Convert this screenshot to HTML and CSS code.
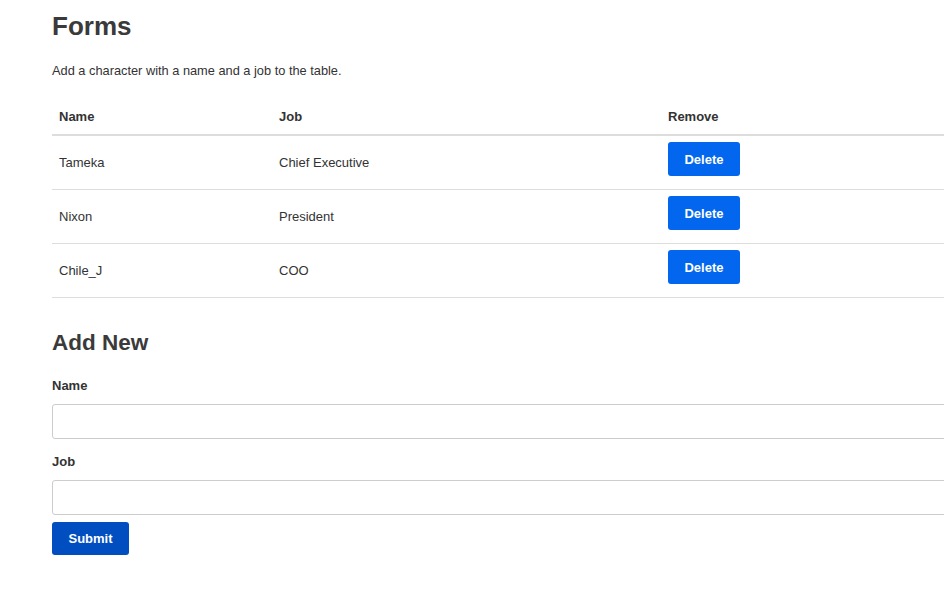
FILE: index.html
```html
<!DOCTYPE html>
<html lang="en">
<head>
<meta charset="utf-8">
<title>Forms</title>
<link rel="stylesheet" href="styles.css">
</head>
<body>
<div class="container">
  <h1 class="title">Forms</h1>
  <p class="lead">Add a character with a name and a job to the table.</p>
  <table class="table">
    <thead>
      <tr>
        <th class="col-name">Name</th>
        <th class="col-job">Job</th>
        <th>Remove</th>
      </tr>
    </thead>
    <tbody>
      <tr>
        <td>Tameka</td>
        <td>Chief Executive</td>
        <td><button class="btn btn-delete">Delete</button></td>
      </tr>
      <tr>
        <td>Nixon</td>
        <td>President</td>
        <td><button class="btn btn-delete">Delete</button></td>
      </tr>
      <tr>
        <td>Chile_J</td>
        <td>COO</td>
        <td><button class="btn btn-delete">Delete</button></td>
      </tr>
    </tbody>
  </table>
  <h2 class="subtitle">Add New</h2>
  <form class="form">
    <label class="label" for="name">Name</label>
    <input class="input" type="text" id="name">
    <label class="label label-job" for="job">Job</label>
    <input class="input" type="text" id="job">
    <button type="button" class="btn btn-submit">Submit</button>
  </form>
</div>
</body>
</html>
```
FILE: styles.css
```css
html, body {
  margin: 0;
  padding: 0;
  overflow: hidden;
  background: #fff;
}
body {
  font-family: "Liberation Sans", Arial, sans-serif;
  color: #333;
  font-size: 13px;
}
.container {
  width: 1100px;
  padding-left: 52px;
}
.title {
  font-size: 26px;
  line-height: 34px;
  font-weight: bold;
  margin: 9px 0 0;
  color: #3a3a3a;
}
.lead {
  font-size: 12.8px;
  line-height: 20px;
  margin: 18px 0 0;
}
.table {
  width: 100%;
  border-collapse: collapse;
  margin-top: 13px;
}
.table th {
  text-align: left;
  font-weight: bold;
  font-size: 13px;
  line-height: 19px;
  padding: 13px 7px 8px;
  border-bottom: 2px solid #dddddd;
}
.col-name { width: 206px; }
.col-job { width: 375px; }
.table td {
  font-size: 13px;
  line-height: 19px;
  height: 54px;
  padding: 0 7px;
  box-sizing: border-box;
  vertical-align: middle;
  border-bottom: 1px solid #dddddd;
}
.btn {
  font-family: "Liberation Sans", Arial, sans-serif;
  font-weight: bold;
  font-size: 13px;
  color: #fff;
  border: none;
  border-radius: 3px;
  cursor: pointer;
  display: block;
}
.btn-delete {
  background: #0366ee;
  width: 72px;
  height: 34px;
  padding: 0;
  margin-bottom: 6px;
}
.subtitle {
  font-size: 22.5px;
  line-height: 30px;
  font-weight: bold;
  margin: 30px 0 0;
  color: #3a3a3a;
}
.form {
  display: flex;
  flex-direction: column;
  align-items: flex-start;
  margin-top: 18px;
}
.label {
  font-weight: bold;
  font-size: 13px;
  line-height: 20px;
}
.label-job {
  margin-top: 13px;
}
.input {
  box-sizing: border-box;
  width: 100%;
  height: 35px;
  margin-top: 8px;
  border: 1px solid #cccccc;
  border-radius: 3px;
  background: #fff;
  padding: 0 10px;
  font-family: "Liberation Sans", Arial, sans-serif;
  font-size: 13px;
}
.btn-submit {
  background: #004ec0;
  width: 77px;
  height: 33px;
  padding: 0;
  margin-top: 7px;
}
```
